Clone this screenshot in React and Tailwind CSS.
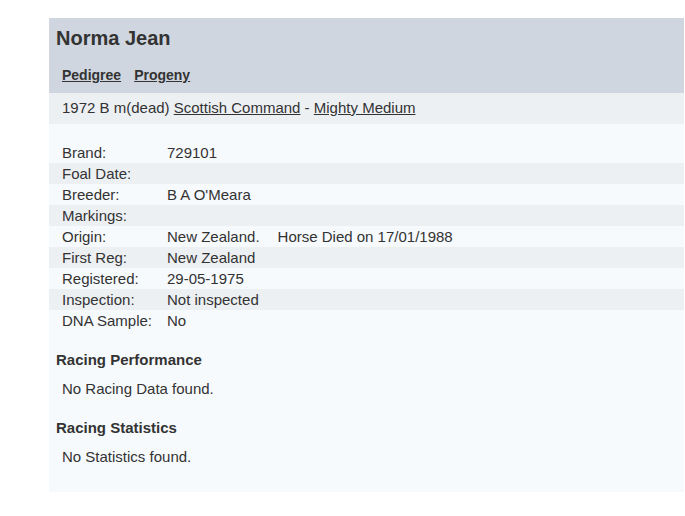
const details = [
  ['Brand:', '729101'],
  ['Foal Date:', ''],
  ['Breeder:', "B A O'Meara"],
  ['Markings:', ''],
  ['Origin:', 'origin'],
  ['First Reg:', 'New Zealand'],
  ['Registered:', '29-05-1975'],
  ['Inspection:', 'Not inspected'],
  ['DNA Sample:', 'No'],
]

export default function App() {
  return (
    <div className="min-h-[516px] bg-white pt-[18px] text-[15px] text-[#333] font-['Liberation_Sans',Arial,sans-serif]">
      <div className="ml-[49px] w-[635px] bg-[#f7fafd] pb-[25px]">
        <div className="bg-[#cfd6df] px-[7px] pt-[7px] pb-[9px]">
          <h1 className="text-[20px] font-bold leading-[26px]">Norma Jean</h1>
          <div className="mt-[15px] flex gap-[13px] pl-[6px] text-[14px] font-bold leading-[18px]">
            <a className="underline">Pedigree</a>
            <a className="underline">Progeny</a>
          </div>
        </div>
        <div className="bg-[#edf0f3] px-[13px] pt-[4px] pb-[6px] leading-[21px]">
          1972 B m(dead) <a className="underline">Scottish Command</a> - <a className="underline">Mighty Medium</a>
        </div>
        <div className="pt-[18px]">
          {details.map(([label, value], i) => (
            <div
              key={label}
              className={`flex h-[21px] items-center pl-[13px] leading-[21px] ${i % 2 === 1 ? 'bg-[#edf0f3]' : ''}`}
            >
              <span className="w-[105px]">{label}</span>
              {value === 'origin' ? (
                <span>
                  New Zealand.<span className="ml-[18px]">Horse Died on 17/01/1988</span>
                </span>
              ) : (
                <span>{value}</span>
              )}
            </div>
          ))}
        </div>
        <h2 className="mt-[19px] pl-[7px] font-bold leading-[20px]">Racing Performance</h2>
        <p className="mt-[9px] pl-[13px] leading-[20px]">No Racing Data found.</p>
        <h2 className="mt-[19px] pl-[7px] font-bold leading-[20px]">Racing Statistics</h2>
        <p className="mt-[9px] pl-[13px] leading-[20px]">No Statistics found.</p>
      </div>
    </div>
  )
}
